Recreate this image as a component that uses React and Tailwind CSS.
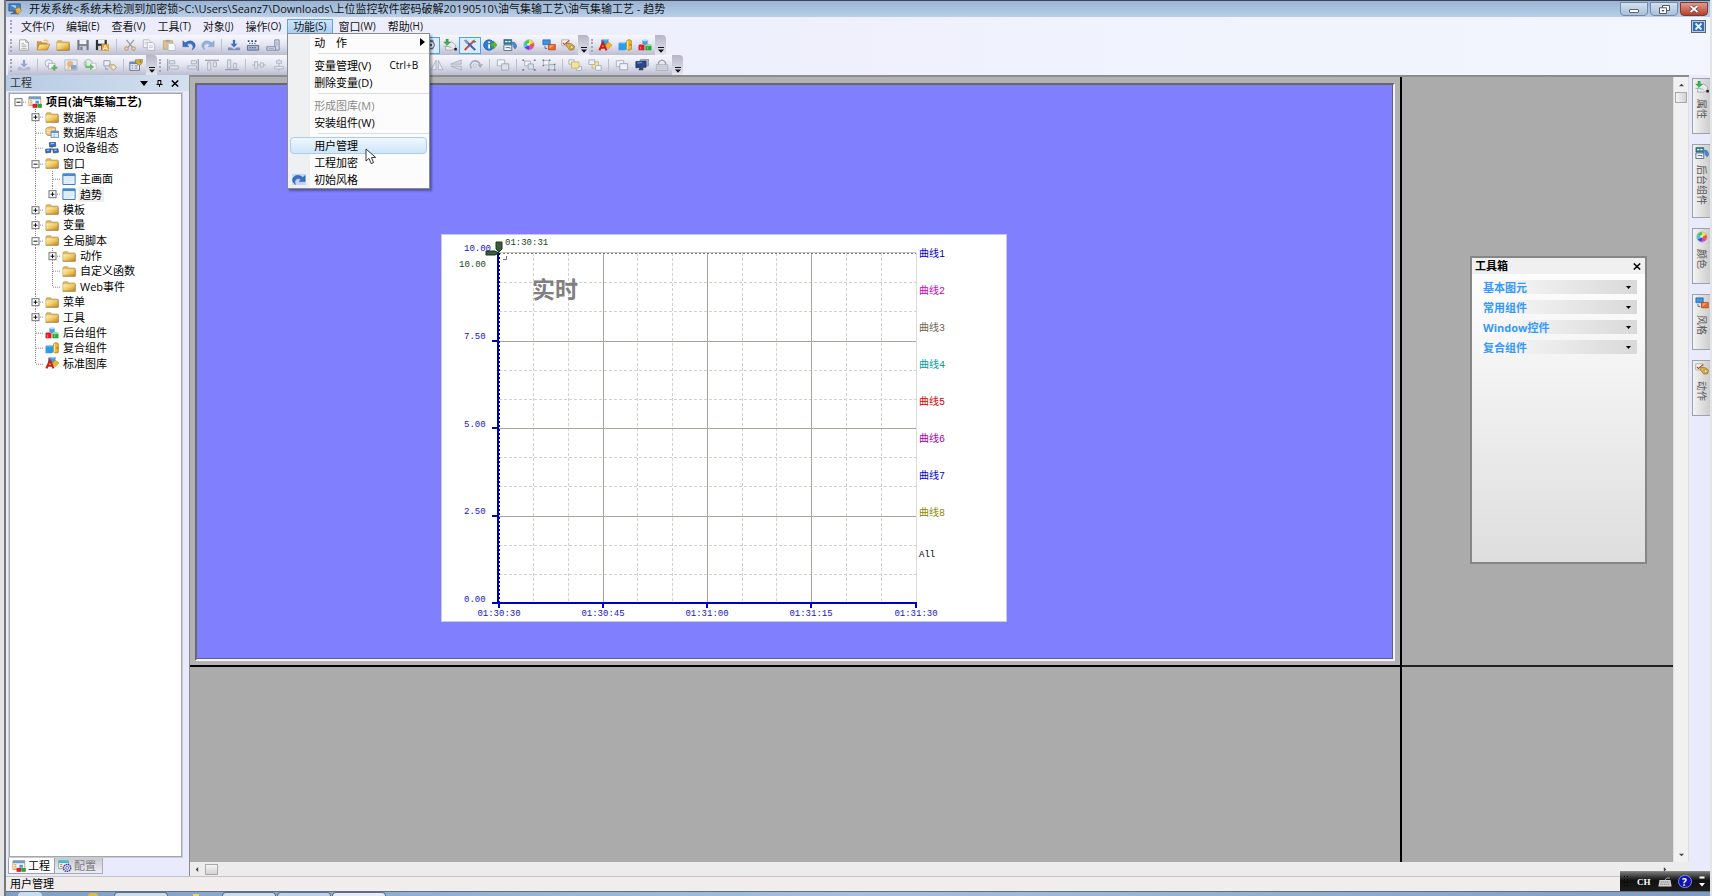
import React from "react";

const UI = "font-['Open_Sans','Noto_Sans_CJK_SC',sans-serif]";

/* ---------- icons ---------- */

function Svg({ children, className = "h-[12px] w-[14px]", vb = "0 0 16 14" }) {
  return (
    <svg viewBox={vb} className={"shrink-0 " + className} preserveAspectRatio="none" aria-hidden="true">
      {children}
    </svg>
  );
}

const shapes = {
  folder: (
    <>
      <path d="M1 3.5 L2 2 H6.5 L7.5 3.5 H15 V13 H1 Z" fill="#e0b95a" stroke="#a98a4c" strokeWidth=".6" />
      <path d="M1.4 5 H14.6 V12.6 H1.4 Z" fill="url(#gFolder)" />
      <path d="M1 13.1 H15.2 V5" stroke="#8a6a2c" strokeWidth=".7" fill="none" />
    </>
  ),
  folderOpen: (
    <>
      <path d="M1 12.5 V2.5 H6 L7.5 4 H13 V12.5 Z" fill="#c99a3e" />
      <path d="M4 6 H16 L13 12.8 H1 Z" fill="url(#gFolder)" stroke="#a8761f" strokeWidth=".6" />
      <path d="M9 2 q3 -2 5 1.5" stroke="#f0b93b" strokeWidth="1.2" fill="none" />
    </>
  ),
  page: (
    <>
      <path d="M3 1 H10 L13 4 V13 H3 Z" fill="#fff" stroke="#8c8c8c" strokeWidth=".9" />
      <path d="M10 1 V4 H13" fill="none" stroke="#8c8c8c" strokeWidth=".8" />
      <path d="M5 5 H8 M5 7 H11 M5 9 H11 M5 11 H11" stroke="#8c8c8c" strokeWidth=".8" />
    </>
  ),
  save: (
    <>
      <path d="M1.5 1 H14.5 V13 H1.5 Z" fill="#777b89" />
      <path d="M4 1 H12 V6 H4 Z" fill="#f2f4f8" />
      <path d="M4 8 H12 V13 H4 Z" fill="#cfd3dc" />
      <path d="M5 9 H7.5 V13 H5 Z" fill="#777c8a" />
    </>
  ),
  saveAs: (
    <>
      <path d="M1 1 H13.5 V13 H1 Z" fill="#2e3138" />
      <path d="M3.5 1 H11 V5.5 H3.5 Z" fill="#f2f4f8" />
      <path d="M3.5 8 H7 V13 H3.5 Z" fill="#cfd3dc" />
      <path d="M7.5 6 H16 V14 H7.5 Z" fill="#e9a02f" />
      <path d="M9.3 12.7 L11.7 7.5 L14.2 12.7 M10.3 11 H13.3" stroke="#fff" strokeWidth="1.1" fill="none" />
    </>
  ),
  cut: (
    <>
      <path d="M4 1 L11 10 M12.5 1 L5.5 10" stroke="#9aa0aa" strokeWidth="1.6" />
      <circle cx="4" cy="11.3" r="2" fill="none" stroke="#c8a56a" strokeWidth="1.4" />
      <circle cx="12" cy="11.3" r="2" fill="none" stroke="#c8a56a" strokeWidth="1.4" />
    </>
  ),
  copy: (
    <>
      <path d="M1.5 1 H8 L10 3 V10 H1.5 Z" fill="#f5f6f9" stroke="#a5abb8" strokeWidth=".9" />
      <path d="M6 4 H12 L14.5 6.5 V13.3 H6 Z" fill="#f5f6f9" stroke="#a5abb8" strokeWidth=".9" />
      <path d="M8 8 H12.5 M8 10 H12.5 M3 4 H6 M3 6 H5" stroke="#b4bac6" strokeWidth=".8" />
    </>
  ),
  paste: (
    <>
      <path d="M1.5 2 H12 V12 H1.5 Z" fill="#dcc08c" stroke="#b79c69" strokeWidth=".8" />
      <path d="M4.5 1 H9 V3.4 H4.5 Z" fill="#9fa3ad" />
      <path d="M7 5 H13 L15 7 V13.5 H7 Z" fill="#fafbfc" stroke="#a8adb8" strokeWidth=".8" />
    </>
  ),
  undo: <path d="M1 2 V9 H8 L5.6 6.6 Q9.5 4 12 7 Q13.5 9.5 11.5 12.8 Q17 9 14.2 4.8 Q10 -.3 3.6 4.5 Z" fill="#3a6fc6" stroke="#234f9c" strokeWidth=".5" />,
  redo: <path d="M15 2 V9 H8 L10.4 6.6 Q6.5 4 4 7 Q2.5 9.5 4.5 12.8 Q-1 9 1.8 4.8 Q6 -.3 12.4 4.5 Z" fill="#8fb0da" stroke="#7a9cc9" strokeWidth=".5" />,
  restore: (
    <>
      <path d="M0 1 H16 V14 H0 Z" fill="#c5d6ee" />
      <path d="M15 3 V10 H8 L10.4 7.6 Q6.5 5 4 8 Q2.5 10 4 13.5 Q-1.5 9.5 1.8 5 Q6 .2 12.4 5.2 Z" fill="#3570c4" stroke="#23539e" strokeWidth=".5" />
    </>
  ),
  importA: (
    <>
      <path d="M8 1 V7" stroke="#3a6fc6" strokeWidth="2.6" />
      <path d="M4 5.5 H12 L8 10 Z" fill="#3a6fc6" />
      <path d="M1 13 V10 H5 L8 12 L11 10 H15 V13 Z" fill="#7f90b4" />
    </>
  ),
  importB: (
    <>
      <path d="M8 1 V7" stroke="#8ea6cc" strokeWidth="2.6" />
      <path d="M4 5.5 H12 L8 10 Z" fill="#8ea6cc" />
      <path d="M1 13.3 V9.4 H4.6 L8 12 L11.4 9.4 H15 V13.3 Z" fill="#b3bac9" />
    </>
  ),
  blocks: (
    <>
      <path d="M1 1 H15 V13 H1 Z" fill="#f5f6fb" />
      <path d="M2 2.5 H14" stroke="#37517e" strokeWidth="2" strokeDasharray="2 2" />
      <path d="M3.5 5 H12.5" stroke="#5b73a0" strokeWidth="1.4" strokeDasharray="1.5 1.5" />
      <path d="M1.6 7.4 H14.4 V13 H1.6 Z" fill="#aab8d2" stroke="#42547a" strokeWidth=".9" />
      <path d="M4 10.2 H12" stroke="#42547a" strokeWidth="1.4" strokeDasharray="1.6 1.2" />
    </>
  ),
  ruler: (
    <>
      <path d="M10 1 H15 V13 H10 Z" fill="#d3d9e6" stroke="#6c7895" strokeWidth=".9" />
      <path d="M1 9 H11 V13 H1 Z" fill="#d3d9e6" stroke="#6c7895" strokeWidth=".9" />
      <path d="M12.5 3 V8 M3 11 H9" stroke="#8a94ad" strokeWidth=".8" />
    </>
  ),
  panelBtn: (
    <>
      <path d="M1 1 H13 V12 H1 Z" fill="#5e7cab" />
      <circle cx="10" cy="7" r="4.2" fill="#dfe6f2" stroke="#394c70" />
      <circle cx="10" cy="7" r="1.6" fill="#394c70" />
    </>
  ),
  importPaint: (
    <>
      <path d="M3 10 L5 5.5 L10 3.4 L14.4 7 L14 11 L9 13 H3 Z" fill="#e8e9ec" stroke="#8c909a" strokeWidth=".7" />
      <path d="M3.4 0 H6 V3.4 H8.6 L4.7 7.4 L.8 3.4 H3.4 Z" fill="#37b24d" stroke="#1e7a33" strokeWidth=".4" />
      <path d="M.6 8.6 Q6 8 9.6 10" stroke="#8fbb97" strokeWidth="1.1" fill="none" />
      <path d="M13 10.4 H15.8 V13.4 H13 Z" fill="#1a1a1a" />
    </>
  ),
  tools: (
    <>
      <path d="M2 12.8 L12.5 2" stroke="#c84b40" strokeWidth="2.3" />
      <path d="M3 2 L14 13" stroke="#3b62b8" strokeWidth="2.4" />
      <path d="M.8 1.4 L3.6 .6 L6.6 4.4 L4.6 6 Z" fill="#8e95a5" />
      <path d="M11 2.6 L13.6 .4 L13.4 2.2 L15.6 2.6 L13 4.6 Z" fill="#6d7587" />
    </>
  ),
  infoGo: (
    <>
      <circle cx="6.8" cy="7" r="6" fill="#2f7fd2" stroke="#1f5aa5" />
      <path d="M7 3 V4.6 M7 6 V11" stroke="#fff" strokeWidth="2" />
      <path d="M9 4.8 H12 V2.2 L16.3 7 L12 11.8 V9 H9 Z" fill="#58b82d" stroke="#3c8a1d" strokeWidth=".5" />
    </>
  ),
  components: (
    <>
      <path d="M1 .6 H10 V6 H1 Z" fill="#387d94" stroke="#23505f" strokeWidth=".6" />
      <path d="M2.5 3 H5 M6.2 3 H8.5" stroke="#fff" strokeWidth="1.6" />
      <path d="M1 7 H10 V13.4 H1 Z" fill="#f4f7fa" stroke="#3a5872" strokeWidth=".9" />
      <path d="M3 10 H8 V11.4" stroke="#3a5872" strokeWidth=".9" fill="none" />
      <path d="M9 4.5 Q14 1.5 15.6 8 H16.5 L13.8 11.8 L11 8 H12.5 Q12 5.5 9 6.5 Z" fill="#4c86cf" stroke="#2a5595" strokeWidth=".4" />
    </>
  ),
  wheel: (
    <>
      <circle cx="8" cy="7" r="6.6" fill="#b9bcc4" />
      <path d="M8 7 L8 1.6 A5.6 5.4 0 0 1 12.9 4.3 Z" fill="#f4e534" />
      <path d="M8 7 L12.9 4.3 A5.6 5.4 0 0 1 12.9 9.7 Z" fill="#f4572e" />
      <path d="M8 7 L12.9 9.7 A5.6 5.4 0 0 1 8 12.4 Z" fill="#e63bd0" />
      <path d="M8 7 L8 12.4 A5.6 5.4 0 0 1 3.1 9.7 Z" fill="#4a45e8" />
      <path d="M8 7 L3.1 9.7 A5.6 5.4 0 0 1 3.1 4.3 Z" fill="#38c8e8" />
      <path d="M8 7 L3.1 4.3 A5.6 5.4 0 0 1 8 1.6 Z" fill="#3ecb45" />
      <circle cx="7.5" cy="6.3" r="1.7" fill="#fff" opacity=".7" />
    </>
  ),
  styleRects: (
    <>
      <path d="M1 1 H9.4 V6.6 H1 Z" fill="#3d93dd" stroke="#2460a0" strokeWidth=".8" />
      <path d="M7.4 6.4 H15.2 V12.6 H7.4 Z" fill="#e8692f" stroke="#a43d16" strokeWidth=".8" />
      <path d="M8.4 7.4 H14 L8.4 11 Z" fill="#f7a25c" />
      <path d="M3.4 8 V11 H6" stroke="#5c6577" strokeWidth="1" fill="none" />
    </>
  ),
  action: (
    <>
      <path d="M.8 1 H9 V8 H.8 Z" fill="#f6f6f3" stroke="#8b8b86" strokeWidth=".7" />
      <path d="M2 4.4 L4 6.4 L9.5 1.5" stroke="#cf3d2b" strokeWidth="1.2" fill="none" />
      <path d="M6 5 L12 5.6 L15.6 8.6 L14.4 12.6 L10 13 L6 8 Z" fill="#d9b04f" stroke="#86651f" strokeWidth=".7" />
      <circle cx="12.2" cy="9.6" r="1.8" fill="#f4e2ae" stroke="#86651f" strokeWidth=".6" />
    </>
  ),
  library: (
    <>
      <path d="M3.5 1.2 L5.5 0 H12 V7 H3.5 Z" fill="#3b9be4" />
      <path d="M3.5 1.2 L5.5 0 H12 L10 1.8 Z" fill="#8fcbf5" />
      <path d="M11.5 3.5 L16 7 L12 11.5 L8 8 Z" fill="#f3b721" stroke="#a97510" strokeWidth=".5" />
      <path d="M1.6 13.3 L5.6 4.2 L9.8 13.3 M3 10.2 H8.2" stroke="#cf1f13" strokeWidth="2.4" fill="none" />
    </>
  ),
  composite: (
    <>
      <path d="M.6 5 L3 3.6 H9.4 V11.6 L8 13 H.6 Z" fill="#2f9ae6" />
      <path d="M.6 5 L3 3.6 H9.4 L7.6 5.2 Z" fill="#93d2f8" />
      <path d="M9.8 2 Q12.6 -.6 15.4 2 V12 Q12.6 14 9.8 12 Z" fill="#e8b52a" stroke="#9b6f0e" strokeWidth=".6" />
      <path d="M11 2 V12" stroke="#fbe9a8" strokeWidth="1.2" />
      <path d="M13 7 H15.4" stroke="#6d4c05" strokeWidth=".8" />
    </>
  ),
  cubes: (
    <>
      <path d="M5 1.2 H11 V7 H5 Z" fill="#3c9ee6" />
      <ellipse cx="8" cy="1.6" rx="3" ry="1.3" fill="#b4dcf7" />
      <path d="M.6 7 H7.4 V13.2 H.6 Z" fill="#d81f2c" />
      <path d="M.6 7 L2 5.8 H7.4 V7 Z" fill="#f47f86" />
      <path d="M8.4 7.4 H15.4 V13.2 H8.4 Z" fill="#2aa53a" />
      <ellipse cx="12" cy="7.2" rx="3.4" ry="1.3" fill="#93df91" />
      <path d="M3 9 V12 M11 9 V12" stroke="#fff" strokeWidth=".7" opacity=".7" />
    </>
  ),
  project: (
    <>
      <path d="M1 .8 H14.6 V11 H1 Z" fill="#fbfbfa" stroke="#e08a26" strokeWidth=".9" />
      <path d="M1 .8 H14.6 V3.8 H1 Z" fill="#5aa3e0" />
      <path d="M2.5 5.4 H5 M2.5 7.4 H5 M2.5 9.4 H5" stroke="#dc8b2d" strokeWidth="1" />
      <path d="M5.2 9.2 H10.3 V13.8 H5.2 Z" fill="#d8232e" />
      <path d="M10.6 9.2 H15.8 V13.8 H10.6 Z" fill="#2ba53c" />
      <path d="M8.4 5.6 H12.6 V9 H8.4 Z" fill="#459fe5" />
    </>
  ),
  database: (
    <>
      <path d="M1 3 Q5 -.5 12 2 V9 Q8 12 3 11 L1 9 Z" fill="#edc479" stroke="#a87428" strokeWidth=".7" />
      <path d="M1.4 4 Q5 6.5 11 4 M1.4 7 Q5 9 9 7.6" stroke="#fff1cf" strokeWidth="1" fill="none" />
      <path d="M7 6 H15.4 V13.6 H7 Z" fill="#fff" stroke="#37679f" strokeWidth=".8" />
      <path d="M7 6 H15.4 V8.2 H7 Z" fill="#4c8fd2" />
      <path d="M8 10.2 H14.4 M8 12 H14.4 M10.5 8.2 V13.6" stroke="#8aa9cc" strokeWidth=".6" />
    </>
  ),
  network: (
    <>
      <path d="M8 5 V9 M3.6 9 H12.6" stroke="#5a6478" strokeWidth="1" fill="none" />
      <path d="M4.8 .8 L11.8 0 L12.4 5 L5.4 5.8 Z" fill="#2f72c8" stroke="#2b3a55" strokeWidth=".7" />
      <path d="M.6 8.4 L6.4 7.8 L6.8 12 L1 12.8 Z" fill="#2f72c8" stroke="#2b3a55" strokeWidth=".7" />
      <path d="M9 8.4 L14.8 7.8 L15.4 12 L9.6 12.8 Z" fill="#2f72c8" stroke="#2b3a55" strokeWidth=".7" />
      <path d="M6.2 2.2 L10.4 1.7 M2 9.8 L5 9.4 M10.4 9.8 L13.4 9.4" stroke="#bfe0ff" strokeWidth="1" />
    </>
  ),
  windowI: (
    <>
      <path d="M1 1 H15 V13.4 H1 Z" fill="#e9f3fc" stroke="#3577bb" strokeWidth="1.1" />
      <path d="M1 1 H15 V3.6 H1 Z" fill="#3f8ad6" />
      <path d="M3 6 H13 M3 8.5 H13 M3 11 H9" stroke="#cbe1f4" strokeWidth="1" />
    </>
  ),
  configI: (
    <>
      <path d="M.8 .8 H12 V10 H.8 Z" fill="#f8f6ee" stroke="#3da3b3" strokeWidth=".8" />
      <path d="M.8 .8 H12 V3.6 H.8 Z" fill="#35bfd0" />
      <path d="M2.4 5.4 H5 M2.4 7.6 H5" stroke="#e46a2a" strokeWidth="1.1" />
      <circle cx="10.4" cy="9.2" r="4.2" fill="#d8daf0" stroke="#3b3f9c" strokeWidth="1.5" strokeDasharray="1.8 .7" />
      <circle cx="10.4" cy="9.2" r="1.7" fill="#fff" stroke="#3b3f9c" strokeWidth=".8" />
    </>
  ),
  addShape: (
    <>
      <circle cx="5.5" cy="5" r="4.3" fill="#eef1f6" stroke="#a2aab8" />
      <path d="M5 5 H12.5 V11.5 H5 Z" fill="#f2f4f8" stroke="#a2aab8" />
      <path d="M11.8 7 V13.6 M8.6 10.3 H15.2" stroke="#5bb364" strokeWidth="2.4" />
    </>
  ),
  picture: (
    <>
      <path d="M1 1 H15 V13 H1 Z" fill="#e6eaf2" stroke="#a2aab8" strokeWidth=".8" />
      <circle cx="7" cy="6" r="3.6" fill="#e8b77b" />
      <path d="M8 7 H14.4 V12.4 H8 Z" fill="#87a4cf" />
      <path d="M1.5 12.5 L5 9 L8 12.5 Z" fill="#e7cf8e" />
    </>
  ),
  exchange: (
    <>
      <circle cx="6" cy="5.4" r="4.8" fill="#e3efe5" stroke="#9bb59f" />
      <path d="M9 5 H15 V12.6 H9 Z" fill="#f2f4f8" stroke="#b3b9c5" strokeWidth=".8" />
      <path d="M4 3 V8 H8 V5.6 L13 9.4 L8 13 V10.6 H2.8 V3 Z" fill="#6cbc6f" />
    </>
  ),
  tag: (
    <>
      <path d="M1 2 H8 V8 H1 Z" fill="#eef0f5" stroke="#8f96a5" />
      <path d="M7 6 L13 6.5 L15.6 10 L12 13.4 L8 10 Z" fill="#dccb9f" stroke="#ab9a6c" strokeWidth=".7" />
      <circle cx="12" cy="9.8" r="1.3" fill="#fff" />
      <path d="M3 9 V12 H6" stroke="#8f96a5" fill="none" />
    </>
  ),
  props: (
    <>
      <path d="M1 3.6 H12 V13.2 H1 Z" fill="#f6f7fa" stroke="#4d5f85" />
      <path d="M1 3.6 H12 V6 H1 Z" fill="#6289c6" />
      <path d="M3 8 H5 M6.4 8 H10 M3 10.6 H5 M6.4 10.6 H10" stroke="#4d5f85" strokeWidth="1" />
      <path d="M7 1 L15.4 .6 L15 5 L12 7.6 L8 5 Z" fill="#d7ab3c" stroke="#85631a" strokeWidth=".6" />
      <path d="M13 1.5 V4" stroke="#4b9f3c" strokeWidth="1.2" />
    </>
  ),
  alignL: (
    <>
      <path d="M2 0 V14" stroke="#8b93a4" strokeWidth="1.2" />
      <path d="M4 2 H10 V5.6 H4 Z M4 8 H14 V11.6 H4 Z" fill="#dfe3eb" stroke="#9fa7b6" strokeWidth=".9" />
    </>
  ),
  alignR: (
    <>
      <path d="M14 0 V14" stroke="#8b93a4" strokeWidth="1.2" />
      <path d="M6 2 H12 V5.6 H6 Z M2 8 H12 V11.6 H2 Z" fill="#dfe3eb" stroke="#9fa7b6" strokeWidth=".9" />
    </>
  ),
  alignT: (
    <>
      <path d="M0 1.5 H16" stroke="#8b93a4" strokeWidth="1.2" />
      <path d="M3 3.5 H6.6 V13 H3 Z M9.6 3.5 H13 V9 H9.6 Z" fill="#dfe3eb" stroke="#9fa7b6" strokeWidth=".9" />
    </>
  ),
  alignB: (
    <>
      <path d="M0 12.5 H16" stroke="#8b93a4" strokeWidth="1.2" />
      <path d="M3 1 H6.6 V10.6 H3 Z M9.6 5 H13 V10.6 H9.6 Z" fill="#dfe3eb" stroke="#9fa7b6" strokeWidth=".9" />
    </>
  ),
  centerH: (
    <>
      <path d="M0 7 H16" stroke="#a8afbd" />
      <path d="M3 3 H6.4 V11 H3 Z M9.6 4.5 H13 V9.5 H9.6 Z" fill="#dfe3eb" stroke="#a8afbd" strokeWidth=".9" />
    </>
  ),
  centerV: (
    <>
      <path d="M8 0 V14" stroke="#a8afbd" />
      <path d="M5 2 H11 V5 H5 Z M3 8.6 H13 V11.6 H3 Z" fill="#dfe3eb" stroke="#a8afbd" strokeWidth=".9" />
    </>
  ),
  flipH: <path d="M7 1.5 V12.5 H1.5 Z M9.4 1.5 V12.5 H15 Z" fill="#e3e6ee" stroke="#a4abba" strokeWidth=".9" />,
  flipV: <path d="M14 6 H2 L14 1 Z M14 8.4 H2 L14 13 Z" fill="#d4d9e3" stroke="#a4abba" strokeWidth=".9" />,
  rotate: (
    <>
      <path d="M3 11 Q-.5 6 4 3 Q9.5 .5 12.6 6" stroke="#a4abba" strokeWidth="1.8" fill="none" />
      <path d="M9.6 6 H16 L12.8 10.4 Z" fill="#a4abba" />
      <circle cx="6.6" cy="7.6" r="2" fill="none" stroke="#b9bfcb" />
    </>
  ),
  layers: (
    <>
      <path d="M1.5 1 H10 V8 H1.5 Z" fill="#f1f3f7" stroke="#a4abba" />
      <path d="M6.5 5.6 H14.5 V13 H6.5 Z" fill="#dbe3ea" stroke="#98a1b2" />
    </>
  ),
  group: (
    <>
      <path d="M3 2.4 H9.5 V8 H3 Z" fill="#f1f3f7" stroke="#a4abba" />
      <path d="M7 5.8 H13 V11.8 H7 Z" fill="#dbe3ea" stroke="#98a1b2" />
      <path d="M.5 .5 H2.5 V2.3 H.5 Z M13.5 .5 H15.5 V2.3 H13.5 Z M.5 11.8 H2.5 V13.6 H.5 Z M13.5 11.8 H15.5 V13.6 H13.5 Z" fill="#6f788b" />
    </>
  ),
  ungroup: (
    <>
      <path d="M1.6 1.6 H8 V7 H1.6 Z" fill="#f1f3f7" stroke="#a4abba" />
      <path d="M8 6.6 H14.4 V12.6 H8 Z" fill="#dbe3ea" stroke="#98a1b2" />
      <path d="M.6 .6 H2.4 V2.2 H.6 Z M8 .6 H9.6 V2.2 H8 Z M.6 7 H2.4 V8.6 H.6 Z M13.6 12 H15.4 V13.6 H13.6 Z M6.6 12 H8.4 V13.6 H6.6 Z M13.6 5.4 H15.4 V7 H13.6 Z" fill="#6f788b" />
    </>
  ),
  front: (
    <>
      <path d="M1 1 H7 V6 H1 Z M9.6 8.6 H15.4 V13.4 H9.6 Z" fill="#eef1f5" stroke="#a4abba" />
      <path d="M4 3.4 H12.4 V10.6 H4 Z" fill="#f2e3a0" stroke="#c5b368" />
    </>
  ),
  back: (
    <>
      <path d="M4.6 3.4 H12 V10.6 H4.6 Z" fill="#f2e3a0" stroke="#c5b368" />
      <path d="M1 1 H7.6 V6.4 H1 Z M8.6 7.6 H15 V13.2 H8.6 Z" fill="#eef1f5" stroke="#a4abba" />
    </>
  ),
  cascade: (
    <>
      <path d="M1.5 2 H10 V9 H1.5 Z" fill="#f1f3f7" stroke="#a4abba" />
      <path d="M5.5 5.4 H14.5 V12.6 H5.5 Z" fill="#eef1f5" stroke="#98a1b2" />
    </>
  ),
  monitor: (
    <>
      <path d="M6 .8 L15.6 .4 V8 L6 8.6 Z" fill="#aeb8cc" stroke="#5d6982" strokeWidth=".6" />
      <path d="M1 3 L12.6 2.4 V9.6 L1 10.2 Z" fill="#27468f" stroke="#28324a" strokeWidth=".9" />
      <path d="M2.6 4.6 L8 4.2" stroke="#84aef0" strokeWidth="1" />
      <path d="M5 10.4 H9.4 V13 H4 Z" fill="#39425a" />
    </>
  ),
  lock: (
    <>
      <path d="M4 7 V4 Q8 -1.4 12 4 V7" fill="none" stroke="#9da1aa" strokeWidth="1.6" />
      <path d="M1.4 6.6 H14.6 V13.4 H1.4 Z" fill="#dadce2" stroke="#9da1aa" strokeWidth=".8" />
      <path d="M2 9 H14 M2 11.2 H14" stroke="#b2b6bf" strokeWidth=".8" />
    </>
  ),
  app: (
    <>
      <path d="M1 1 H14 V9.4 H1 Z" fill="#3b86cd" stroke="#3f4d66" strokeWidth=".9" />
      <path d="M2.6 2.6 H9 V6 Z" fill="#a9d6f7" />
      <path d="M5.4 9.4 H9.6 V11.6 H12 V13.2 H3 V11.6 H5.4 Z" fill="#59657c" />
      <path d="M8 7 L13 5 L15.4 9 L11 13.4 Z" fill="#eab243" stroke="#a16c17" strokeWidth=".6" />
    </>
  ),
};

function Icon({ name, className }) {
  return <Svg className={className}>{shapes[name]}</Svg>;
}

/* ---------- toolbars ---------- */

const Grip = () => (
  <span className="flex h-full w-[6px] shrink-0 items-center justify-center">
    <span className="h-[13px] w-0 border-l-2 border-dotted border-[#a4a7b8]" />
  </span>
);

const Sep = ({ className = "w-[7px]" }) => (
  <span className={"flex h-full shrink-0 items-center justify-center " + className}>
    <span className="h-[13px] w-px bg-[#bcbecb]" />
  </span>
);

function Group({ icons, className, active = [] }) {
  return (
    <div className={"flex h-full shrink-0 items-center " + className}>
      {icons.map((n, i) => (
        <button
          key={i}
          type="button"
          aria-label={n}
          className={
            "flex h-[17px] min-w-0 flex-1 items-center justify-center " +
            (active.includes(i) ? "border border-[#4aa3f0] bg-[#dcecfb]" : "")
          }
        >
          <Icon name={n} />
        </button>
      ))}
    </div>
  );
}

const Overflow = () => (
  <button
    type="button"
    aria-label="更多按钮"
    className="flex h-full w-[11px] shrink-0 items-end justify-center rounded-r-sm bg-linear-to-b from-[#b5b5c8] to-[#e6e6f2] pb-[2px]"
  >
    <svg viewBox="0 0 6 6" className="h-[6px] w-[6px]" aria-hidden="true">
      <path d="M0 .5 H6" stroke="#111" />
      <path d="M0 2.5 H6 L3 5.8 Z" fill="#111" />
    </svg>
  </button>
);

const Bar = ({ children }) => (
  <div className="flex h-[20px] shrink-0 items-center rounded-r-sm bg-linear-to-b from-[#f7f8fe] via-[#e3e4f0] to-[#bdbdd2]">{children}</div>
);

function Toolbars() {
  return (
    <div className="flex shrink-0 flex-col bg-linear-to-r from-[#ebebfb] to-[#f3f6fe] pl-[2px]">
      <div className="flex h-[20px]">
        <Bar>
          <Grip />
          <Group className="w-[98px]" icons={["page", "folderOpen", "folder", "save", "saveAs"]} />
          <Sep className="w-[8px]" />
          <Group className="w-[98px]" icons={["cut", "copy", "paste", "undo", "redo"]} />
          <Sep className="w-[6px]" />
          <Group
            className="w-[354px]"
            active={[10, 12]}
            icons={["importA", "blocks", "ruler", "page", "save", "group", "layers", "picture", "props", "tag", "panelBtn", "importPaint", "tools", "infoGo", "components", "wheel", "styleRects", "action"]}
          />
          <Overflow />
        </Bar>
        <Bar>
          <Grip />
          <Group className="w-[60px]" icons={["library", "composite", "cubes"]} />
          <Overflow />
        </Bar>
      </div>
      <div className="flex h-[20px]">
        <Bar>
          <Grip />
          <Group className="w-[20px]" icons={["importB"]} />
          <Sep />
          <Group className="w-[79px]" icons={["addShape", "picture", "exchange", "tag"]} />
          <Sep className="w-[6px]" />
          <Group className="w-[20px]" icons={["props"]} />
          <Overflow />
        </Bar>
        <Bar>
          <Grip />
          <Group className="w-[79px]" icons={["alignL", "alignR", "alignT", "alignB"]} />
          <Sep />
          <Group
            className="w-[237px]"
            icons={["centerH", "centerV", "alignL", "alignR", "alignT", "alignB", "group", "layers", "cascade", "flipH", "flipV", "rotate"]}
          />
          <Sep />
          <Group className="w-[20px]" icons={["layers"]} />
          <Sep className="w-[6px]" />
          <Group className="w-[40px]" icons={["group", "ungroup"]} />
          <Sep className="w-[6px]" />
          <Group className="w-[40px]" icons={["front", "back"]} />
          <Sep />
          <Group className="w-[60px]" icons={["cascade", "monitor", "lock"]} />
          <Overflow />
        </Bar>
      </div>
    </div>
  );
}

/* ---------- title and menu bar ---------- */

function TitleBar() {
  const btn = "flex h-[14px] w-[28px] items-center justify-center rounded-b-sm border ";
  return (
    <header className="flex h-[17px] shrink-0 items-center gap-[7px] border-t border-[#3c4450] bg-linear-to-b from-[#9bb4d4] to-[#b7cfe9] pr-[2px] pl-[2px]">
      <Icon name="app" />
      <h1 className="flex-1 truncate text-[11px] leading-[16px] text-[#111]">
        开发系统&lt;系统未检测到加密锁&gt;C:\Users\Seanz7\Downloads\上位监控软件密码破解20190510\油气集输工艺\油气集输工艺 - 趋势
      </h1>
      <div className="flex gap-[2px]">
        <button type="button" aria-label="最小化" className={btn + "border-[#7089a8] bg-linear-to-b from-[#d3e0ef] to-[#a9c0da]"}>
          <span className="mt-[3px] h-[4px] w-[10px] rounded-[1px] border border-[#5a6472] bg-white" />
        </button>
        <button type="button" aria-label="还原" className={btn + "border-[#7089a8] bg-linear-to-b from-[#d3e0ef] to-[#a9c0da]"}>
          <svg viewBox="0 0 11 9" className="h-[9px] w-[11px]" aria-hidden="true">
            <path d="M3.5 .5 H10.5 V5.5 H3.5 Z" fill="#fff" stroke="#4f5967" />
            <path d="M.5 2.8 H7.5 V8.5 H.5 Z" fill="#fff" stroke="#4f5967" />
            <path d="M2.8 5 H5.2 V6.4 H2.8 Z" fill="#4f5967" />
          </svg>
        </button>
        <button type="button" aria-label="关闭" className={btn + "border-[#7a3a38] bg-linear-to-b from-[#dd9a8e] to-[#b93c2a]"}>
          <svg viewBox="0 0 10 8" className="h-[8px] w-[10px]" aria-hidden="true">
            <path d="M1.5 1 L8.5 7 M8.5 1 L1.5 7" stroke="#5c302c" strokeWidth="3.2" />
            <path d="M1.5 1 L8.5 7 M8.5 1 L1.5 7" stroke="#fff" strokeWidth="2" />
          </svg>
        </button>
      </div>
    </header>
  );
}

const menus = [
  ["文件", "F"], ["编辑", "E"], ["查看", "V"], ["工具", "T"], ["对象", "J"],
  ["操作", "O"], ["功能", "S"], ["窗口", "W"], ["帮助", "H"],
];

const dropItems = [
  { label: "动　作", sub: true },
  null,
  { label: "变量管理(V)", key: "Ctrl+B" },
  { label: "删除变量(D)" },
  null,
  { label: "形成图库(M)", off: true },
  { label: "安装组件(W)" },
  null,
  { label: "用户管理", hot: true },
  { label: "工程加密" },
  { label: "初始风格", icon: "restore" },
];

function DropMenu() {
  return (
    <div
      role="menu"
      className="absolute top-[14px] left-0 z-20 w-[143px] border border-[#868b94] bg-linear-to-r from-[#eff0f1] from-[22px] to-[#fcfcfc] to-[22px] shadow-[2px_2px_2px_rgba(0,0,0,0.35)]"
    >
      {dropItems.map((d, i) =>
        d === null ? (
          <div key={i} className="flex h-[6px] items-center pl-[30px]">
            <span className="h-px flex-1 bg-[#dcdcdc]" />
          </div>
        ) : (
          <button
            key={i}
            type="button"
            role="menuitem"
            disabled={d.off}
            className={
              "flex h-[17px] w-full items-center px-[2px] text-[11px] leading-[15px] " +
              (d.off ? "text-[#8a8a8a]" : "text-black")
            }
          >
            <span
              className={
                "flex h-full w-full items-center rounded-sm border pr-px pl-px " +
                (d.hot ? "border-[#aacdea] bg-linear-to-b from-[#f0f7fd] to-[#cde6fa]" : "border-transparent")
              }
            >
              <span className="flex w-[22px] shrink-0">{d.icon && <Icon name={d.icon} />}</span>
              <span className="flex-1 text-left whitespace-pre">{d.label}</span>
              {d.key && <span className="mr-[7px] text-[10px]">{d.key}</span>}
              {d.sub && (
                <svg viewBox="0 0 5 8" className="h-[8px] w-[5px]" aria-hidden="true">
                  <path d="M0 0 L5 4 L0 8 Z" fill="#000" />
                </svg>
              )}
            </span>
          </button>
        )
      )}
      <svg viewBox="0 0 12 17" className="absolute top-[114px] left-[77px] h-[17px] w-[12px]" aria-hidden="true">
        <path d="M1 1 V13 L4 10.4 L6.2 15.6 L8.6 14.6 L6.4 9.6 L10.6 9.4 Z" fill="#fff" stroke="#222" strokeWidth=".9" />
      </svg>
    </div>
  );
}

function MenuBar() {
  return (
    <nav className="flex h-[18px] shrink-0 items-center bg-linear-to-r from-[#ebebfb] to-[#f3f6fe] pr-[4px] pl-[2px]">
      <Grip />
      <div className="ml-px flex">
        {menus.map(([t, k]) => (
          <div key={k} className="relative">
            <button
              type="button"
              className={
                "flex h-[15px] items-center border px-[5px] text-[11px] leading-[13px] whitespace-nowrap text-[#111] " +
                (k === "S" ? "border-[#63a3e0] bg-linear-to-b from-[#cfe6fb] to-[#a9cff3]" : "border-transparent")
              }
            >
              {t}
              <span className="text-[10px]">({k})</span>
            </button>
            {k === "S" && <DropMenu />}
          </div>
        ))}
      </div>
      <button type="button" aria-label="关闭窗口" className="ml-auto flex h-[13px] w-[15px] items-center justify-center border border-[#586375] bg-[#b5cbe6]">
        <svg viewBox="0 0 11 9" className="h-[9px] w-[11px]" aria-hidden="true">
          <path d="M0 0 H11 V9 H0 Z" fill="#2e6fb7" />
          <path d="M2.5 1.5 L8.5 7.5 M8.5 1.5 L2.5 7.5" stroke="#e8f2fc" strokeWidth="1.8" />
        </svg>
      </button>
    </nav>
  );
}

/* ---------- project tree ---------- */

// level, label, icon, expander, last sibling
const tree = [
  [0, "项目(油气集输工艺)", "project", "-", true],
  [1, "数据源", "folder", "+"],
  [1, "数据库组态", "database", ""],
  [1, "IO设备组态", "network", ""],
  [1, "窗口", "folder", "-"],
  [2, "主画面", "windowI", ""],
  [2, "趋势", "windowI", "+", true],
  [1, "模板", "folder", "+"],
  [1, "变量", "folder", "+"],
  [1, "全局脚本", "folder", "-"],
  [2, "动作", "folder", "+"],
  [2, "自定义函数", "folder", ""],
  [2, "Web事件", "folder", "", true],
  [1, "菜单", "folder", "+"],
  [1, "工具", "folder", "+"],
  [1, "后台组件", "cubes", ""],
  [1, "复合组件", "composite", ""],
  [1, "标准图库", "library", "", true],
];

const dots = { stroke: "#8c8c8c", strokeDasharray: "1 1" };

function Branch({ level, exp, last }) {
  return (
    <svg className="h-full w-[17px] shrink-0" aria-hidden="true">
      {level > 0 && <line x1="8.5" y1="0" x2="8.5" y2={last ? "50%" : "100%"} {...dots} />}
      <svg y="50%" overflow="visible">
        <line x1="9" y1=".5" x2="17" y2=".5" {...dots} />
        {exp && (
          <>
            <rect x="5" y="-3" width="7" height="7" fill="#fff" stroke="#6f7378" />
            <path d={exp === "+" ? "M6.5 .5 H10.5 M8.5 -1.5 V2.5" : "M6.5 .5 H10.5"} stroke="#111" />
          </>
        )}
      </svg>
    </svg>
  );
}

function Tree() {
  return (
    <ul className="flex h-[277px] flex-col text-[11px] text-black">
      {tree.map(([level, label, icon, exp, last]) => (
        <li key={label} className="flex min-h-0 flex-1 items-center">
          {level > 0 && <span className="w-[17px] shrink-0" />}
          {level > 1 && (
            <svg className="h-full w-[17px] shrink-0" aria-hidden="true">
              <line x1="8.5" y1="0" x2="8.5" y2="100%" {...dots} />
            </svg>
          )}
          <Branch level={level} exp={exp} last={last} />
          <Icon name={icon} className="ml-px h-[12px] w-[14px]" />
          <span
            className={
              "ml-[2px] px-[2px] leading-[15px] whitespace-nowrap " +
              (level === 0 ? "font-bold " : "") +
              (label === "趋势" ? "bg-[#efefef]" : "")
            }
          >
            {label}
          </span>
        </li>
      ))}
    </ul>
  );
}

function ProjectPanel() {
  return (
    <aside className="flex w-[183px] shrink-0 flex-col bg-[#e9eafb]">
      <div className="flex h-[16px] shrink-0 items-center bg-linear-to-r from-[#b7cbe2] to-[#d3e0ee] pr-[10px] pl-[4px]">
        <h2 className="flex-1 text-[11px] leading-[16px] text-[#333]">工程</h2>
        <div className="flex items-center gap-[8px]">
          <button type="button" aria-label="窗口位置">
            <svg viewBox="0 0 8 5" className="h-[5px] w-[8px]" aria-hidden="true"><path d="M0 0 H8 L4 5 Z" fill="#000" /></svg>
          </button>
          <button type="button" aria-label="自动隐藏">
            <svg viewBox="0 0 7 7" className="h-[7px] w-[7px]" aria-hidden="true">
              <path d="M2 0 V4 M4.8 0 V4 M2 .5 H5 M.5 4.5 H6.5 M3.5 4.5 V7" stroke="#000" fill="none" />
            </svg>
          </button>
          <button type="button" aria-label="关闭面板">
            <svg viewBox="0 0 8 7" className="h-[7px] w-[8px]" aria-hidden="true"><path d="M.8 .5 L7.2 6.5 M7.2 .5 L.8 6.5" stroke="#000" strokeWidth="1.5" /></svg>
          </button>
        </div>
      </div>
      <div className="mt-px mr-[6px] ml-[2px] min-h-0 flex-1 border border-[#c9ccd6] bg-white">
        <div className="h-full border border-[#a3a6ae]">
          <Tree />
        </div>
      </div>
      <div className="flex h-[18px] shrink-0 pb-[2px] pl-[2px]">
        <button type="button" className="flex w-[47px] items-center gap-[2px] border border-t-0 border-[#9da0ab] bg-white pl-[3px] text-[11px] leading-[14px] text-black">
          <Icon name="project" />工程
        </button>
        <button type="button" className="flex w-[48px] items-center gap-[2px] border border-t-0 border-l-0 border-[#a9acb6] bg-linear-to-b from-[#c9c9d2] to-[#ededf2] pl-[3px] text-[11px] leading-[14px] text-[#7a7a7a]">
          <Icon name="configI" />配置
        </button>
      </div>
    </aside>
  );
}

/* ---------- trend chart ---------- */

const majorX = [57, 161, 265, 369, 474];
const majorY = [18, 106, 193, 281, 368];
const minorX = [91, 126, 195, 230, 300, 334, 404, 439];
const minorY = [47, 76, 135, 164, 222, 251, 310, 339];
const curves = ["#0000cc", "#cc00b4", "#6d6350", "#00a09a", "#dd0000", "#a800a8", "#0000dd", "#8a8a00"];

function Chart() {
  return (
    <svg
      viewBox="0 0 564 386"
      className="absolute top-[150px] left-[245px] h-[386px] w-[564px] bg-white font-['Liberation_Mono','Noto_Sans_CJK_SC',monospace] text-[9px] outline outline-[#c9c9ee]"
      role="img"
      aria-label="实时趋势"
    >
      <g stroke="#d2d2cd" strokeDasharray="3 2">
        {minorX.map((x) => <line key={x} x1={x + 0.5} x2={x + 0.5} y1="18" y2="368" />)}
        {minorY.map((y) => <line key={y} y1={y + 0.5} y2={y + 0.5} x1="57" x2="474" />)}
      </g>
      <g stroke="#a9a59c">
        {majorX.slice(1, 4).map((x) => <line key={x} x1={x + 0.5} x2={x + 0.5} y1="18" y2="368" />)}
        {majorY.slice(1, 4).map((y) => <line key={y} y1={y + 0.5} y2={y + 0.5} x1="57" x2="474" />)}
      </g>
      <path d="M474.5 18 V368" stroke="#dcdcd8" />
      <path d="M57 17.5 H474" stroke="#c9c9c4" />
      <path d="M57 18.5 H474" stroke="#77756f" strokeDasharray="2 2" />
      <g stroke="#0000c0" strokeWidth="2">
        <path d="M56 17 V368 M56 368 H475" />
        {majorY.slice(1).map((y) => <line key={y} x1="50" x2="56" y1={y} y2={y} />)}
        {majorX.map((x) => <line key={x} x1={x} x2={x} y1="368" y2="373" />)}
      </g>
      <path d="M57.5 18 V367" stroke="#111" strokeDasharray="2 2" />
      <path d="M54 7 H60 V14 L57 17 L54 14 Z" fill="#3f5a3f" stroke="#14381c" />
      <path d="M44 16 H53 L57 18 L53 20 H44 Z" fill="#3f5a3f" stroke="#14381c" />
      <path d="M61 24.5 H64.5 V21" stroke="#6d6d9c" fill="none" />
      <g fill="#1414cc">
        <text x="22" y="16">10.00</text>
        <text x="22" y="104">7.50</text>
        <text x="22" y="192">5.00</text>
        <text x="22" y="279">2.50</text>
        <text x="22" y="367">0.00</text>
        {["01:30:30", "01:30:45", "01:31:00", "01:31:15", "01:31:30"].map((t, i) => (
          <text key={t} x={majorX[i]} y="381" textAnchor="middle">{t}</text>
        ))}
      </g>
      <g fill="#1c4a22">
        <text x="17" y="32">10.00</text>
        <text x="63" y="10">01:30:31</text>
      </g>
      <text x="90" y="63" fill="#808080" className="text-[23px] font-bold">实时</text>
      <g className="text-[10px]">
        {curves.map((c, i) => (
          <text key={c} x="477" y={22 + i * 37} fill={c}>{"曲线" + (i + 1)}</text>
        ))}
        <text x="477" y="322" fill="#000" className="text-[9px]">All</text>
      </g>
    </svg>
  );
}

/* ---------- workspace ---------- */

function Toolbox() {
  return (
    <section className="absolute top-[179px] right-[26px] flex h-[308px] w-[177px] flex-col border-2 border-[#868686] bg-linear-to-b from-white to-[#dedede]">
      <div className="flex h-[16px] items-center bg-[#f0f0f0] pr-[4px] pl-[3px]">
        <h2 className="flex-1 text-[11px] leading-[16px] font-bold text-black">工具箱</h2>
        <button type="button" aria-label="关闭工具箱">
          <svg viewBox="0 0 8 7" className="h-[7px] w-[8px]" aria-hidden="true"><path d="M.8 .5 L7.2 6.5 M7.2 .5 L.8 6.5" stroke="#000" strokeWidth="1.5" /></svg>
        </button>
      </div>
      <div className="flex flex-col gap-[6px] px-[8px] pt-[6px]">
        {["基本图元", "常用组件", "Window控件", "复合组件"].map((t) => (
          <button key={t} type="button" className="flex h-[14px] items-center bg-linear-to-r from-[#fbfbfb] to-[#d9d9d9] pr-[6px] pl-[3px] text-left text-[11px] leading-[14px] font-bold text-[#3399ff]">
            <span className="flex-1 pt-[2px]">{t}</span>
            <svg viewBox="0 0 5 3" className="h-[3px] w-[5px]" aria-hidden="true"><path d="M0 0 H5 L2.5 3 Z" fill="#000" /></svg>
          </button>
        ))}
      </div>
    </section>
  );
}

const Arrow = ({ d, className }) => (
  <svg viewBox="0 0 6 6" className={className} aria-hidden="true">
    <path d={d} fill="#444" />
  </svg>
);

function Workspace() {
  return (
    <main className="flex min-w-0 flex-1 flex-col border-t-2 border-l border-t-[#8c8c8c] border-l-[#8c8c8c] bg-[#ececec]">
      <div className="flex min-h-0 flex-1">
        <div className="relative grid min-w-0 flex-1 grid-cols-[1213fr_271fr] grid-rows-[591fr_195fr] bg-[#ababab]">
          <div className="border-r-2 border-b-2 border-black bg-[#b2b2b2] pt-[6px] pr-[5px] pb-[4px] pl-[5px]">
            <div className="h-full border-2 border-t-[#66666c] border-r-[#f4f4f4] border-b-[#f4f4f4] border-l-[#66666c]">
              <div className="relative h-full overflow-hidden border-r border-b border-[#5c5c9c] bg-[#8080ff]">
                <Chart />
              </div>
            </div>
          </div>
          <div className="border-b-2 border-[#222]" />
          <div className="border-r-2 border-black" />
          <div />
          <Toolbox />
        </div>
        <div className="flex w-[16px] shrink-0 flex-col items-center border-x border-[#dedede] bg-[#f1f1f1] pt-[5px] pb-[4px]">
          <button type="button" aria-label="向上滚动"><Arrow d="M0 5 L3 2 L6 5 Z" className="block h-[5px] w-[5px]" /></button>
          <div className="mt-[5px] h-[11px] w-[12px] border border-[#a9a9a9] bg-linear-to-r from-[#f5f5f5] to-[#d2d2d2]" />
          <button type="button" aria-label="向下滚动" className="mt-auto"><Arrow d="M0 1 L3 4 L6 1 Z" className="block h-[5px] w-[5px]" /></button>
        </div>
      </div>
      <div className="flex h-[14px] shrink-0 items-center pr-[21px] pl-[4px]">
        <button type="button" aria-label="向左滚动"><Arrow d="M5 0 L2 3 L5 6 Z" className="block h-[5px] w-[5px]" /></button>
        <div className="ml-[6px] h-[11px] w-[13px] border border-[#a9a9a9] bg-linear-to-b from-[#f5f5f5] to-[#d2d2d2]" />
        <button type="button" aria-label="向右滚动" className="ml-auto"><Arrow d="M1 0 L4 3 L1 6 Z" className="block h-[5px] w-[5px]" /></button>
      </div>
    </main>
  );
}

function SideTabs() {
  const tabs = [
    ["importPaint", "属性", "h-[56px]"],
    ["components", "后台组件", "h-[74px]"],
    ["wheel", "颜色", "h-[56px]"],
    ["styleRects", "风格", "h-[56px]"],
    ["action", "动作", "h-[56px]"],
  ];
  return (
    <div className="flex w-[21px] shrink-0 flex-col items-end gap-[10px] bg-[#e9eafb] pt-[3px]">
      {tabs.map(([icon, t, h]) => (
        <button
          key={t}
          type="button"
          className={
            "flex w-[18px] shrink-0 flex-col items-center gap-[6px] border border-r-0 border-[#9da1ae] bg-linear-to-r from-[#f3f3f3] to-[#cdcdcd] pt-[2px] text-[10px] leading-[15px] text-[#555] " + h
          }
        >
          <Icon name={icon} className="h-[12px] w-[14px]" />
          <span className="whitespace-nowrap [text-orientation:sideways] [writing-mode:vertical-rl]">{t}</span>
        </button>
      ))}
    </div>
  );
}

/* ---------- bottom ---------- */

function ImeBar() {
  return (
    <div className="absolute right-[2px] bottom-[5px] z-10 flex h-[20px] w-[90px] items-center border-t border-[#888] bg-linear-to-b from-[#777] via-[#111] via-45% to-[#1c1c1c] pr-[5px] pl-[3px] text-white">
      <span className="h-[13px] w-[6px] bg-[radial-gradient(#000_1px,transparent_1px)] bg-[size:3px_3px]" />
      <button type="button" className="ml-[8px] font-['Liberation_Serif',serif] text-[9px] leading-[18px] font-bold">CH</button>
      <button type="button" aria-label="软键盘" className="ml-[7px]">
        <svg viewBox="0 0 14 10" className="block h-[10px] w-[14px]" aria-hidden="true">
          <path d="M7 3 Q8 0 12 1" stroke="#aaa" fill="none" />
          <path d="M1.5 3 H12.5 L13.6 9.4 H.4 Z" fill="#d5d5d5" />
          <path d="M2.5 5 H11.5 M2 7.2 H12" stroke="#777" strokeDasharray="1.3 .7" />
        </svg>
      </button>
      <button type="button" aria-label="帮助" className="ml-[6px] flex h-[13px] w-[14px] items-center justify-center rounded-full border border-[#7c8fe8] bg-[#1010b4] text-[10px] leading-[10px] font-bold">?</button>
      <button type="button" aria-label="语言栏选项" className="ml-auto">
        <svg viewBox="0 0 6 11" className="block h-[11px] w-[6px]" aria-hidden="true">
          <path d="M.5 1.5 H5.5" stroke="#fff" strokeWidth="2" />
          <path d="M0 7 H6 L3 10.5 Z" fill="#fff" />
        </svg>
      </button>
    </div>
  );
}

function Taskbar() {
  const task = "h-full w-[54px] rounded-t-sm border border-b-0 border-[#5f6f84] ";
  return (
    <div className="flex h-[5px] shrink-0 items-end overflow-hidden border-t border-[#5f7086] bg-linear-to-r from-[#7f9fc4] via-[#a5c0de] to-[#7f9cc0] pl-[12px]">
      <span className="h-[4px] w-[24px] rounded-t-full bg-[#c8dcf0]" />
      <span className="ml-[46px] h-[3px] w-[10px] rounded-t-full bg-[#e2b84b]" />
      <span className={task + "ml-[16px] bg-[#cddced]"} />
      <span className="ml-[25px] h-[2px] w-[6px] bg-[#e8dc5a]" />
      <span className={task + "ml-[23px] bg-[#cddced]"} />
      <span className={task + "ml-px bg-[#bdd2e8]"} />
      <span className={task + "ml-px bg-[#e4ecf5]"} />
    </div>
  );
}

export default function App() {
  return (
    <div className={"relative flex h-screen min-h-[640px] overflow-hidden bg-[#e2e4e6] " + UI}>
      <svg className="absolute h-0 w-0" aria-hidden="true">
        <defs>
          <linearGradient id="gFolder" x1="0" y1="0" x2="1" y2="1">
            <stop offset="0" stopColor="#fdf3c4" />
            <stop offset=".5" stopColor="#eecb66" />
            <stop offset="1" stopColor="#cf8a18" />
          </linearGradient>
        </defs>
      </svg>
      <div className="w-[6px] shrink-0 border-r-2 border-[#74777c]" />
      <div className="flex min-w-0 flex-1 flex-col">
        <TitleBar />
        <MenuBar />
        <Toolbars />
        <div className="flex min-h-0 flex-1">
          <ProjectPanel />
          <Workspace />
          <SideTabs />
        </div>
        <footer className="flex h-[15px] shrink-0 items-center border-t border-[#c3c3c3] bg-[#f0edec] pl-[4px] text-[11px] leading-[14px] text-black">用户管理</footer>
        <Taskbar />
      </div>
      <div className="w-[2px] shrink-0" />
      <ImeBar />
    </div>
  );
}
